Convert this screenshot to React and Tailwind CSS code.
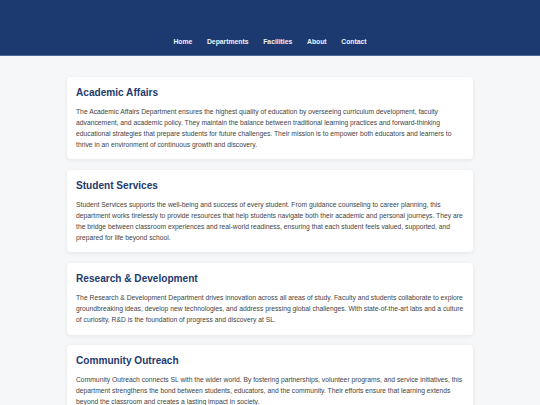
const links = ['Home', 'Departments', 'Facilities', 'About', 'Contact']

const departments = [
  {
    title: 'Academic Affairs',
    text: 'The Academic Affairs Department ensures the highest quality of education by overseeing curriculum development, faculty advancement, and academic policy. They maintain the balance between traditional learning practices and forward-thinking educational strategies that prepare students for future challenges. Their mission is to empower both educators and learners to thrive in an environment of continuous growth and discovery.',
  },
  {
    title: 'Student Services',
    text: 'Student Services supports the well-being and success of every student. From guidance counseling to career planning, this department works tirelessly to provide resources that help students navigate both their academic and personal journeys. They are the bridge between classroom experiences and real-world readiness, ensuring that each student feels valued, supported, and prepared for life beyond school.',
  },
  {
    title: 'Research & Development',
    text: 'The Research & Development Department drives innovation across all areas of study. Faculty and students collaborate to explore groundbreaking ideas, develop new technologies, and address pressing global challenges. With state-of-the-art labs and a culture of curiosity, R&D is the foundation of progress and discovery at SL.',
  },
  {
    title: 'Community Outreach',
    text: 'Community Outreach connects SL with the wider world. By fostering partnerships, volunteer programs, and service initiatives, this department strengthens the bond between students, educators, and the community. Their efforts ensure that learning extends beyond the classroom and creates a lasting impact in society.',
  },
]

export default function App() {
  return (
    <div className="min-h-screen bg-[#f6f7f8] font-['Liberation_Sans',Arial,sans-serif]">
      {/* Header */}
      <header className="flex h-[56px] items-end border-b border-[#4b6a98] bg-[#1c3a6f] pb-[7.5px]">
        <nav className="flex w-full justify-center gap-[14.7px]">
          {links.map((l) => (
            <a key={l} className="text-[6.8px] font-bold leading-[12px] text-[#eef1f6]">
              {l}
            </a>
          ))}
        </nav>
      </header>

      {/* Department cards */}
      <main className="mx-auto flex w-[406px] flex-col gap-[10.5px] pt-[21px]">
        {departments.map((d) => (
          <section
            key={d.title}
            className="rounded-[4px] bg-white px-[9px] pb-[9px] pt-[10px] shadow-[0_1px_4px_rgba(0,0,0,0.08)]"
          >
            <h2 className="text-[10.1px] font-bold leading-[12px] text-[#1e3a6e]">{d.title}</h2>
            <p className="mt-[8.3px] text-[6.75px] leading-[10.8px] text-[#444]">{d.text}</p>
          </section>
        ))}
      </main>
    </div>
  )
}
